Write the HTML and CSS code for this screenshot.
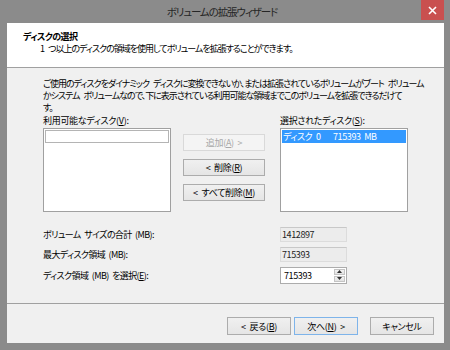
FILE: index.html
```html
<!DOCTYPE html>
<html lang="ja">
<head>
<meta charset="utf-8">
<title>ボリュームの拡張ウィザード</title>
<link rel="stylesheet" href="styles.css">
</head>
<body>
<div class="window">
  <div class="titlebar">
    <span></span>
    <span class="title">ボリュームの拡張ウィザード</span>
    <span class="close"><svg width="9" height="9" viewBox="0 0 9 9"><path d="M1 1 L8 8 M8 1 L1 8" stroke="#fff" stroke-width="1.6"/></svg></span>
  </div>
  <div class="client">
    <div class="header">
      <div class="h-title">ディスクの選択</div>
      <div class="h-sub">1 つ以上のディスクの領域を使用してボリュームを拡張することができます。</div>
    </div>
    <div class="body">
      <p class="note">ご使用のディスクをダイナミック ディスクに変換できないか、または拡張されているボリュームがブート ボリュームかシステム ボリュームなので、下に表示されている利用可能な領域までこのボリュームを拡張できるだけて<br>す。</p>
      <div class="pickers">
        <div class="col">
          <div class="label">利用可能なディスク(<u>V</u>):</div>
          <div class="list"><div class="focus-row"></div></div>
        </div>
        <div class="buttons">
          <button class="btn disabled">追加(<u>A</u>) &gt;</button>
          <button class="btn">&lt; 削除(<u>R</u>)</button>
          <button class="btn">&lt; すべて削除(<u>M</u>)</button>
        </div>
        <div class="col">
          <div class="label">選択されたディスク(<u>S</u>):</div>
          <div class="list"><div class="sel-row"><span class="disk">ディスク 0</span><span>715393 MB</span></div></div>
        </div>
      </div>
      <div class="fields">
        <div class="flabel">ボリューム サイズの合計 (MB):</div>
        <div class="ro">1412897</div>
        <div class="flabel">最大ディスク領域 (MB):</div>
        <div class="ro">715393</div>
        <div class="flabel">ディスク領域 (MB) を選択(<u>E</u>):</div>
        <div class="spin">
          <span class="spin-val">715393</span>
          <span class="spin-btns">
            <span class="sb"><svg width="5" height="3" viewBox="0 0 5 3"><path d="M0 3 L2.5 0 L5 3Z" fill="#333"/></svg></span>
            <span class="sb"><svg width="5" height="3" viewBox="0 0 5 3"><path d="M0 0 L2.5 3 L5 0Z" fill="#333"/></svg></span>
          </span>
        </div>
      </div>
    </div>
    <div class="footer">
      <button class="btn fbtn">&lt; 戻る(<u>B</u>)</button>
      <button class="btn fbtn default">次へ(<u>N</u>) &gt;</button>
      <button class="btn fbtn cancel">キャンセル</button>
    </div>
  </div>
</div>
</body>
</html>
```

FILE: styles.css
```css
* { box-sizing: border-box; }
html, body { margin: 0; padding: 0; }
body {
  width: 450px;
  height: 350px;
  overflow: hidden;
  background: #8b8b8b;
  font-family: "Noto Sans CJK JP", "Noto Sans", sans-serif;
  font-feature-settings: "palt";
  color: #000;
  letter-spacing: -0.4px;
  word-spacing: 2px;
}
.window {
  width: 450px;
  height: 350px;
  display: flex;
  flex-direction: column;
  padding: 0 6px 7px 7px;
}
.titlebar {
  height: 23px;
  flex: none;
  display: grid;
  grid-template-columns: 1fr auto 1fr;
  align-items: start;
  margin: 0 -6px 0 -7px;
  padding-right: 6px;
}
.title {
  font-size: 10.5px;
  line-height: 23px;
  color: #262626;
  letter-spacing: -1.1px;
}
.close {
  justify-self: end;
  width: 23px;
  height: 20px;
  background: #c9504f;
  display: flex;
  align-items: center;
  justify-content: center;
}
.client {
  flex: 1;
  background: #f0f0f0;
  display: flex;
  flex-direction: column;
}
.header {
  height: 45px;
  background: #fff;
  border-bottom: 1px solid #a0a0a0;
  padding: 8px 0 0 16px;
}
.h-title {
  font-size: 9px;
  font-weight: bold;
  line-height: 12px;
  letter-spacing: -0.6px;
}
.h-sub {
  font-size: 9px;
  line-height: 12px;
  padding-left: 17px;
  letter-spacing: -1px;
  word-spacing: 3px;
}
.body {
  flex: 1;
  padding: 10px 0 0 36px;
}
.note {
  margin: 0;
  width: 382px;
  font-size: 9px;
  line-height: 12px;
  letter-spacing: -1px;
  word-spacing: 3px;
}
.pickers {
  display: flex;
  margin-top: 1px;
}
.col { width: 128px; }
.label {
  font-size: 9px;
  line-height: 12px;
  height: 13px;
  letter-spacing: -0.3px;
}
.list {
  height: 84px;
  background: #fff;
  border: 1px solid #a0a0a0;
  padding: 1px;
}
.focus-row {
  height: 13px;
  border: 1px solid #b4b4b4;
}
.sel-row {
  height: 13px;
  background: #3399ff;
  color: #fff;
  font-size: 9px;
  line-height: 13px;
  padding-left: 1px;
  display: flex;
}
.disk { width: 50px; flex: none; }
.buttons {
  width: 82px;
  margin: 19px 15px 0 12px;
  display: flex;
  flex-direction: column;
  gap: 8px;
}
.btn {
  font-family: inherit;
  font-feature-settings: "palt";
  letter-spacing: -0.3px;
  word-spacing: 2px;
  font-size: 9px;
  color: #000;
  height: 17px;
  padding: 0;
  border: 1px solid #acacac;
  border-radius: 0;
  background: linear-gradient(#f0f0f0, #e5e5e5);
  line-height: 15px;
}
.btn.disabled {
  color: #a8a8a8;
  border-color: #d9d9d9;
  background: #f4f4f4;
}
.fields {
  display: grid;
  grid-template-columns: 237px 67px;
  grid-template-rows: 15px 15px 16px;
  row-gap: 5px;
  margin-top: 15px;
  align-items: center;
}
.flabel {
  font-size: 9px;
  line-height: 11px;
  letter-spacing: -0.6px;
}
.ro {
  height: 15px;
  background: #ececec;
  border: 1px solid #dcdcdc;
  border-top-color: #c8c8c8;
  font-size: 9px;
  line-height: 13px;
  padding-left: 1px;
  color: #222;
}
.spin {
  height: 17px;
  background: #fff;
  border: 1px solid #acacac;
  display: flex;
  justify-content: space-between;
  font-size: 9px;
  line-height: 15px;
}
.spin-val { padding-left: 3px; }
.spin-btns {
  width: 12px;
  display: flex;
  flex-direction: column;
  padding: 1px 1px 1px 0;
  gap: 1px;
}
.sb {
  flex: 1;
  background: linear-gradient(#f3f3f3, #e2e2e2);
  border: 1px solid #c4c4c4;
  display: flex;
  align-items: center;
  justify-content: center;
}
.footer {
  height: 40px;
  border-top: 1px solid #a0a0a0;
  display: flex;
  justify-content: flex-end;
  align-items: flex-start;
  padding: 13px 10px 0 0;
  gap: 3px;
}
.fbtn { width: 64px; height: 18px; }
.fbtn.default { border-color: #7eb4ea; }
.fbtn.cancel { margin-left: 9px; }
u { text-decoration: underline; }
```
